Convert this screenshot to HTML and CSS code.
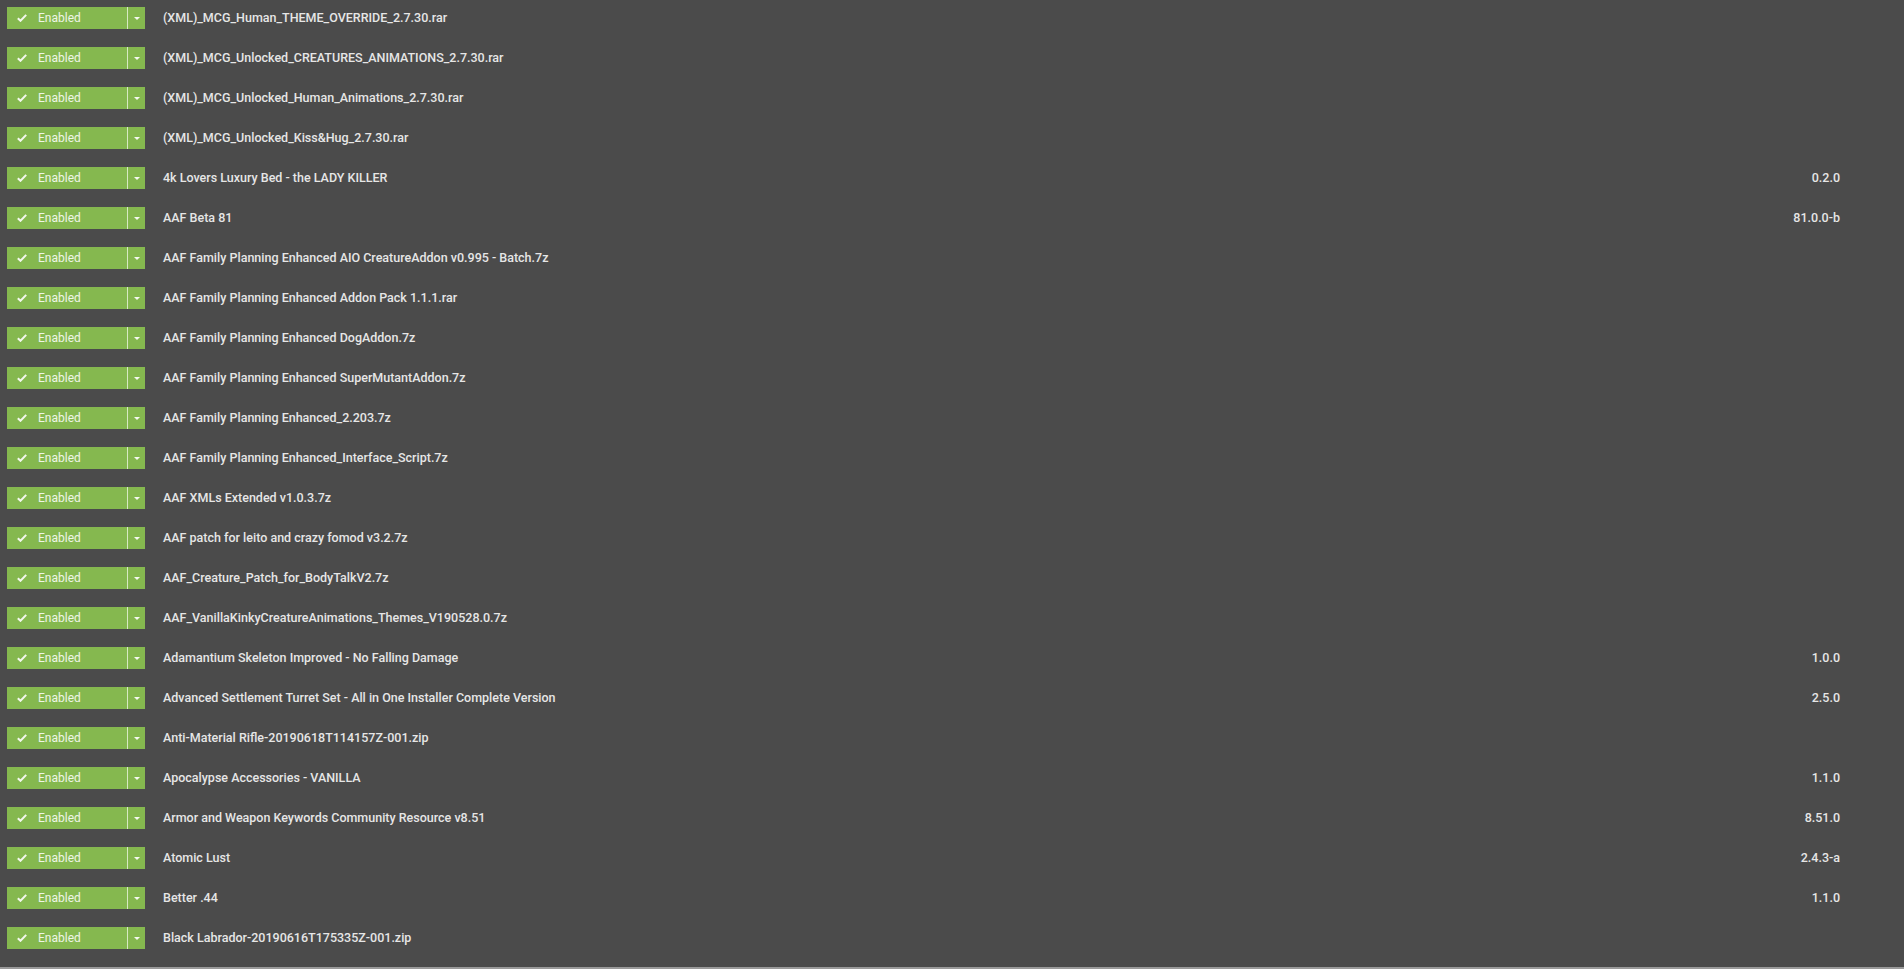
FILE: index.html
```html
<!DOCTYPE html>
<html>
<head>
<meta charset="utf-8">
<link rel="stylesheet" href="styles.css">
</head>
<body>
<div class="list" id="list"></div>
<script>
const rows = [
["(XML)_MCG_Human_THEME_OVERRIDE_2.7.30.rar",""],
["(XML)_MCG_Unlocked_CREATURES_ANIMATIONS_2.7.30.rar",""],
["(XML)_MCG_Unlocked_Human_Animations_2.7.30.rar",""],
["(XML)_MCG_Unlocked_Kiss&Hug_2.7.30.rar",""],
["4k Lovers Luxury Bed - the LADY KILLER","0.2.0"],
["AAF Beta 81","81.0.0-b"],
["AAF Family Planning Enhanced AIO CreatureAddon v0.995 - Batch.7z",""],
["AAF Family Planning Enhanced Addon Pack 1.1.1.rar",""],
["AAF Family Planning Enhanced DogAddon.7z",""],
["AAF Family Planning Enhanced SuperMutantAddon.7z",""],
["AAF Family Planning Enhanced_2.203.7z",""],
["AAF Family Planning Enhanced_Interface_Script.7z",""],
["AAF XMLs Extended v1.0.3.7z",""],
["AAF patch for leito and crazy fomod v3.2.7z",""],
["AAF_Creature_Patch_for_BodyTalkV2.7z",""],
["AAF_VanillaKinkyCreatureAnimations_Themes_V190528.0.7z",""],
["Adamantium Skeleton Improved - No Falling Damage","1.0.0"],
["Advanced Settlement Turret Set - All in One Installer Complete Version","2.5.0"],
["Anti-Material Rifle-20190618T114157Z-001.zip",""],
["Apocalypse Accessories - VANILLA","1.1.0"],
["Armor and Weapon Keywords Community Resource v8.51","8.51.0"],
["Atomic Lust","2.4.3-a"],
["Better .44","1.1.0"],
["Black Labrador-20190616T175335Z-001.zip",""]
];
const list = document.getElementById('list');
for (const [name, ver] of rows) {
  const row = document.createElement('div');
  row.className = 'row';
  row.innerHTML =
    '<div class="btn"><div class="btn-main"><svg class="check" width="10" height="8" viewBox="0 0 10 8"><path d="M0.8 4.2 L3.5 6.8 L9.2 0.9" fill="none" stroke="#f2f7ec" stroke-width="2"/></svg><span class="btn-label">Enabled</span></div><div class="btn-sep"></div><div class="btn-drop"><span class="tri"></span></div></div>' +
    '<div class="name"></div><div class="ver"></div>';
  row.querySelector('.name').textContent = name;
  row.querySelector('.ver').textContent = ver;
  list.appendChild(row);
}
</script>
</body>
</html>
```
FILE: styles.css
```css
html, body {
  margin: 0;
  padding: 0;
  height: 969px;
  overflow: hidden;
  background: #4b4b4b;
}
body {
  font-family: Roboto, "Liberation Sans", sans-serif;
  font-size: 12px;
  color: #e6e6e6;
  box-sizing: border-box;
  border-bottom: 2px solid #9a9a9a;
}
.list {
  display: flex;
  flex-direction: column;
  gap: 18px;
  padding-top: 7px;
  height: 967px;
  box-sizing: border-box;
  overflow: hidden;
}
.row {
  display: flex;
  align-items: center;
  height: 22px;
  flex: none;
  padding-left: 7px;
  padding-right: 64px;
  line-height: 20px;
}
.btn {
  display: flex;
  align-items: stretch;
  width: 138px;
  height: 22px;
  background: #85b84f;
  flex: none;
}
.btn-main {
  display: flex;
  align-items: center;
  width: 120px;
  padding-left: 10px;
  box-sizing: border-box;
}
.check {
  display: block;
  margin-right: 11px;
}
.btn-label {
  color: #eef5e6;
  font-size: 12px;
}
.btn-sep {
  width: 1px;
  background: #d7e9c2;
}
.btn-drop {
  flex: 1;
  display: flex;
  align-items: center;
  justify-content: center;
}
.tri {
  width: 0;
  height: 0;
  border-left: 3px solid transparent;
  border-right: 3px solid transparent;
  border-top: 3px solid #f5f9f0;
  margin-top: 1px;
}
.name {
  margin-left: 18px;
  flex: 1;
  white-space: nowrap;
  font-size: 12.5px;
  font-weight: 500;
}
.ver {
  text-align: right;
  white-space: nowrap;
  font-size: 12.5px;
  font-weight: 500;
}
```
